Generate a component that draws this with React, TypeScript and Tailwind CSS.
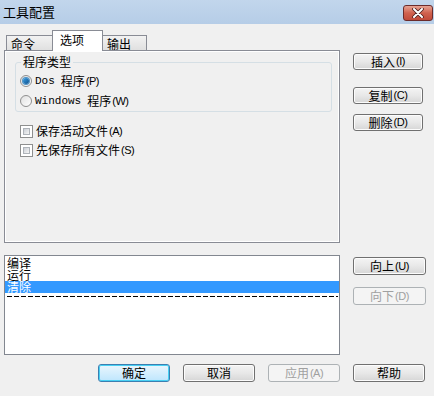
import React from "react";

const F = { fontFamily: '"Noto Sans CJK SC", "Liberation Sans", sans-serif' };

function L({ t, k }: { t: string; k?: string }) {
  return (
    <span className="inline-flex items-center">
      <span>{t}</span>
      {k && (
        <span className="text-[11px] tracking-[-0.5px] leading-none ml-[1px]" style={{ fontFamily: '"Liberation Sans", sans-serif' }}>
          ({k})
        </span>
      )}
    </span>
  );
}

function Btn({ t, k, w = "w-[70px]", h = "h-[17px]", disabled = false, def = false }: { t: string; k?: string; w?: string; h?: string; disabled?: boolean; def?: boolean }) {
  return (
    <div
      className={`${w} ${h} flex items-center justify-center rounded-[3px] border text-[12px] leading-none ${
        disabled
          ? "border-[#adb2b5] bg-[#f4f4f4] text-[#a0a0a0]"
          : def
          ? "border-[#3c7fb1] bg-gradient-to-b from-[#eaf6fd] to-[#bee6fd] text-black shadow-[inset_0_0_0_1px_#48d0f3]"
          : "border-[#707070] bg-gradient-to-b from-[#f4f4f4] via-[#e8e8e8] to-[#d6d6d6] text-black shadow-[inset_0_0_0_1px_#fcfcfc]"
      }`}
    >
      <L t={t} k={k} />
    </div>
  );
}

function Radio({ checked }: { checked: boolean }) {
  return (
    <div className="w-[12px] h-[12px] rounded-full border border-[#8f8f8f] bg-gradient-to-br from-[#e0e0e0] to-[#ffffff] flex items-center justify-center">
      {checked && <div className="w-[6px] h-[6px] rounded-full bg-gradient-to-br from-[#3ba0e4] to-[#0d4f8c] shadow-[0_0_0_1px_#4f93c6]" />}
    </div>
  );
}

function Check() {
  return (
    <div className="w-[13px] h-[13px] border border-[#8e8f8f] bg-white p-[2px]">
      <div className="w-full h-full bg-gradient-to-br from-[#cbcfd5] to-[#f6f6f6] border border-[#aeb3b9]" />
    </div>
  );
}

export default function App() {
  return (
    <div className="w-[434px] h-[396px] bg-[#f0f0f0] overflow-hidden text-[12px] text-black" style={F}>
      {/* title bar */}
      <div className="h-[24px] bg-gradient-to-b from-[#c2d6ec] to-[#b6cde7] flex items-start justify-between">
        <div className="pl-[3px] pt-[4px] text-[13px] leading-[16px]">工具配置</div>
        <div className="mt-[5px] mr-[1px] w-[30px] h-[16px] rounded-[3px] border border-[#6b2b2b] bg-gradient-to-b from-[#e5a293] via-[#d0614e] to-[#c04a3a] flex items-center justify-center">
          <svg width="12" height="10" viewBox="0 0 12 10">
            <path d="M2 1 L10 9 M10 1 L2 9" stroke="#4a1d1d" strokeWidth="3.6" strokeLinecap="round" />
            <path d="M2 1 L10 9 M10 1 L2 9" stroke="#ffffff" strokeWidth="2" strokeLinecap="round" />
          </svg>
        </div>
      </div>

      {/* top section */}
      <div className="flex pl-[4px]">
        <div className="w-[336px]">
          {/* tabs */}
          <div className="h-[26px] flex items-end pl-[2px] relative z-10">
            <div className="w-[47px] h-[15px] border border-b-0 border-[#898c95] bg-gradient-to-b from-[#f2f2f2] to-[#e0e0e0] pl-[4px] leading-[15px]">命令</div>
            <div className="w-[51px] h-[21px] -ml-px border border-b-0 border-[#898c95] bg-white pl-[7px] leading-[18px] -mb-px">选项</div>
            <div className="w-[45px] h-[15px] -ml-px border border-b-0 border-[#898c95] bg-gradient-to-b from-[#f2f2f2] to-[#e0e0e0] pl-[4px] leading-[15px]">输出</div>
          </div>
          {/* panel */}
          <div className="h-[193px] border border-[#898c95] bg-[#f0f0f0] shadow-[inset_-1px_-1px_0_0_#ffffff,inset_1px_1px_0_0_#ffffff] pt-[11px] pl-[10px]">
            <div className="relative w-[317px] h-[50px] border border-[#d5dfe5] rounded-[3px] pt-[9px] pl-[4px]">
              <div className="absolute -top-[8px] left-[5px] bg-[#f0f0f0] px-[2px] leading-[14px]">程序类型</div>
              <div className="flex items-center h-[16px] mt-[1px]">
                <Radio checked />
                <span className="ml-[3px]" style={{ fontFamily: '"Liberation Mono", monospace', fontSize: "11px" }}>Dos</span>
                <span className="ml-[6px]"><L t="程序" k="P" /></span>
              </div>
              <div className="flex items-center h-[16px] mt-[4px]">
                <Radio checked={false} />
                <span className="ml-[3px]" style={{ fontFamily: '"Liberation Mono", monospace', fontSize: "11px" }}>Windows</span>
                <span className="ml-[6px]"><L t="程序" k="W" /></span>
              </div>
            </div>
            <div className="flex items-center h-[16px] mt-[11px] pl-[5px]">
              <Check />
              <span className="ml-[3px]"><L t="保存活动文件" k="A" /></span>
            </div>
            <div className="flex items-center h-[16px] mt-[3px] pl-[5px]">
              <Check />
              <span className="ml-[3px]"><L t="先保存所有文件" k="S" /></span>
            </div>
          </div>
        </div>
        <div className="ml-[13px] pt-[29px] flex flex-col">
          <Btn t="插入" k="I" />
          <div className="mt-[17px]"><Btn t="复制" k="C" /></div>
          <div className="mt-[10px]"><Btn t="删除" k="D" /></div>
        </div>
      </div>

      {/* list section */}
      <div className="flex pl-[4px] mt-[12px]">
        <div className="w-[336px] h-[100px] border border-[#828790] bg-white pt-[1px]">
          <div className="h-[12px] pl-[2px] leading-[12px] text-[12px]">编译</div>
          <div className="h-[12px] pl-[2px] leading-[12px] text-[12px]">运行</div>
          <div className="h-[12px] pl-[2px] leading-[12px] text-[12px] bg-[#3399ff] text-white">清除</div>
          <div className="mt-[3px] ml-[2px] mr-[1px] h-px bg-[repeating-linear-gradient(90deg,#000_0_5px,transparent_5px_7px)]" />
        </div>
        <div className="ml-[13px] pt-[2px] flex flex-col">
          <Btn t="向上" k="U" w="w-[73px]" h="h-[18px]" />
          <div className="mt-[12px]"><Btn t="向下" k="D" w="w-[73px]" h="h-[18px]" disabled /></div>
        </div>
      </div>

      {/* bottom buttons */}
      <div className="flex mt-[9px] pl-[98px] gap-[13px]">
        <Btn t="确定" w="w-[72px]" h="h-[18px]" def />
        <Btn t="取消" w="w-[72px]" h="h-[18px]" />
        <Btn t="应用" k="A" w="w-[72px]" h="h-[18px]" disabled />
        <Btn t="帮助" w="w-[72px]" h="h-[18px]" />
      </div>
    </div>
  );
}
